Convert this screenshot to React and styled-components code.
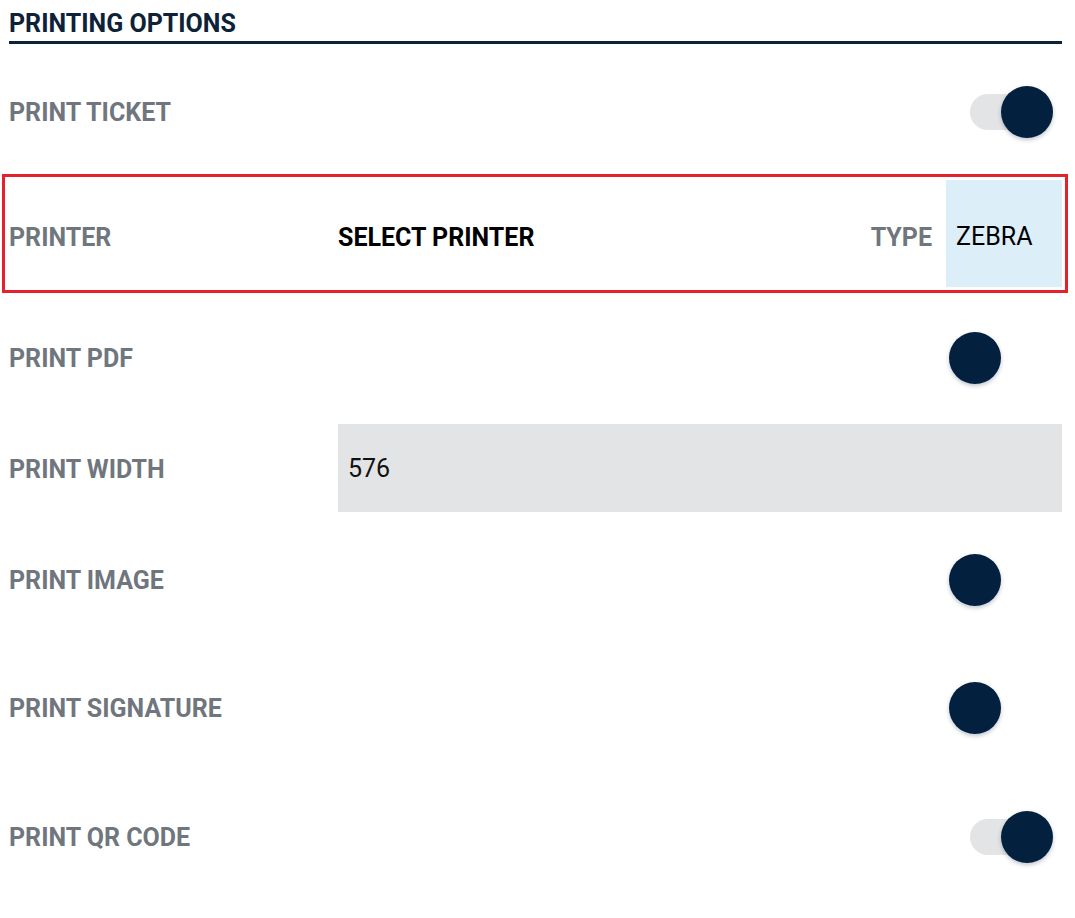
import React from "react";
import styled, { createGlobalStyle } from "styled-components";

const GlobalStyle = createGlobalStyle`
    body {
        margin: 0;
        background: #fff;
        font-family: Roboto, "Noto Sans", Arial, sans-serif;
    }
`;

const Page = styled.div`
    display: flex;
    flex-direction: column;
    padding: 0 13px 0 9px;
`;

const Header = styled.h2`
    margin: 0;
    padding: 9px 0 2px 0;
    font-size: 25px;
    line-height: 30px;
    font-weight: 700;
    color: #0d2137;
    border-bottom: 3px solid #0d2137;
`;

const Row = styled.div`
    display: flex;
    align-items: center;
    height: ${(p) => p.$height}px;
    margin-top: ${(p) => p.$top}px;
`;

const HighlightRow = styled.div`
    display: flex;
    align-items: stretch;
    height: 107px;
    margin: 10px -6px 0 -7px;
    padding: 3px 3px 3px 4px;
    border: 3px solid #e3222d;
`;

const Label = styled.div`
    flex: ${(p) => (p.$fixed ? "0 0 329px" : "1")};
    display: flex;
    align-items: center;
    padding-top: ${(p) => p.$shift || 0}px;
    font-size: 25px;
    font-weight: 700;
    color: #6f767d;
`;

const SelectValue = styled.div`
    flex: 1;
    display: flex;
    align-items: center;
    padding-top: 8px;
    font-size: 25px;
    font-weight: 700;
    color: #000;
`;

const TypeLabel = styled.div`
    display: flex;
    align-items: center;
    padding: 8px 14px 0 0;
    font-size: 25px;
    font-weight: 700;
    color: #6f767d;
`;

const TypeBox = styled.div`
    flex: 0 0 116px;
    display: flex;
    align-items: center;
    padding: 6px 0 0 10px;
    box-sizing: border-box;
    background: #dceef7;
    font-size: 25px;
    color: #000;
`;

const WidthInput = styled.div`
    flex: 1;
    align-self: stretch;
    display: flex;
    align-items: center;
    padding-left: 10px;
    background: #e3e4e6;
    font-size: 25px;
    color: #111;
`;

const Switch = styled.div`
    position: relative;
    width: 104px;
    height: 52px;
    margin-right: 9px;
    flex-shrink: 0;
`;

const Track = styled.div`
    position: absolute;
    left: 21px;
    top: 8px;
    width: 60px;
    height: 36px;
    border-radius: 18px;
    background: ${(p) => (p.$on ? "#e3e4e6" : "transparent")};
`;

const Knob = styled.div`
    position: absolute;
    top: 0;
    left: ${(p) => (p.$on ? 52 : 0)}px;
    width: 52px;
    height: 52px;
    border-radius: 50%;
    background: #03203f;
    box-shadow: 0 2px 4px rgba(3, 32, 63, 0.25);
`;

const Toggle = ({ on }) => (
    <Switch>
        <Track $on={on} />
        <Knob $on={on} />
    </Switch>
);

const App = () => {
    return (
        <Page>
            <GlobalStyle />
            <Header>PRINTING OPTIONS</Header>
            <Row $top={16} $height={104}>
                <Label>PRINT TICKET</Label>
                <Toggle on />
            </Row>
            <HighlightRow>
                <Label $fixed $shift={8}>PRINTER</Label>
                <SelectValue>SELECT PRINTER</SelectValue>
                <TypeLabel>TYPE</TypeLabel>
                <TypeBox>ZEBRA</TypeBox>
            </HighlightRow>
            <Row $top={10} $height={110}>
                <Label>PRINT PDF</Label>
                <Toggle />
            </Row>
            <Row $top={11} $height={88}>
                <Label $fixed $shift={2}>PRINT WIDTH</Label>
                <WidthInput>576</WidthInput>
            </Row>
            <Row $top={13} $height={110}>
                <Label>PRINT IMAGE</Label>
                <Toggle />
            </Row>
            <Row $top={18} $height={110}>
                <Label>PRINT SIGNATURE</Label>
                <Toggle />
            </Row>
            <Row $top={19} $height={110}>
                <Label>PRINT QR CODE</Label>
                <Toggle on />
            </Row>
        </Page>
    );
};

export default App;
